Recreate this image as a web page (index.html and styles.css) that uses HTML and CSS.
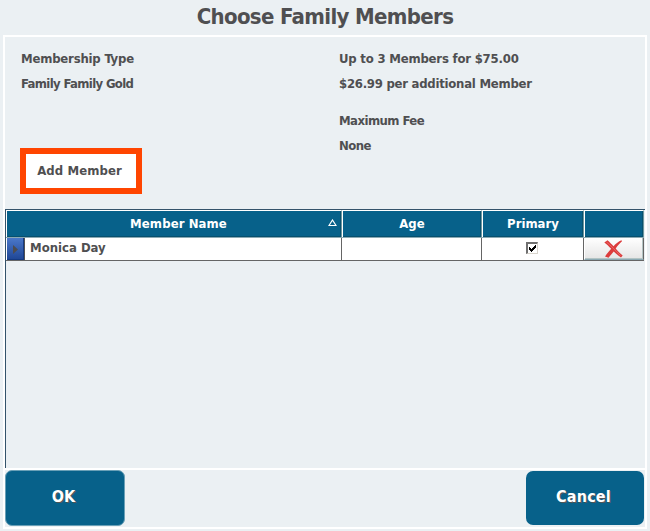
FILE: index.html
```html
<!DOCTYPE html>
<html lang="en">
<head>
    <meta charset="UTF-8">
    <meta name="viewport" content="width=device-width, initial-scale=1.0">
    <title>Choose Family Members</title>
    <link rel="stylesheet" href="styles.css">
</head>
<body>
    <h1>Choose Family Members</h1>
    <main class="panel">
        <section class="info">
            <div class="info-left">
                <p class="membership">Membership Type</p>
                <p class="plan">Family Family Gold</p>
                <button class="add-button">Add Member</button>
            </div>
            <div class="info-right">
                <p class="limit">Up to 3 Members for $75.00</p>
                <p class="extra">$26.99 per additional Member</p>
                <p class="fee">Maximum Fee</p>
                <p class="none">None</p>
            </div>
        </section>
        <section class="grid">
            <div class="row head">
                <div class="cell name"><span class="t-name">Member Name</span>
                    <svg class="sort" width="9" height="8" viewBox="0 0 9 8"><path d="M4.5 1L8 6.500H1Z" fill="none" stroke="#fff" stroke-width="1.200"/></svg>
                </div>
                <div class="cell age">Age</div>
                <div class="cell primary">Primary</div>
                <div class="cell remove"></div>
            </div>
            <div class="row member">
                <div class="marker">
                    <svg width="5" height="9" viewBox="0 0 5 9"><path d="M0 0L5 4.5L0 9Z" fill="#4c4c50"/></svg>
                </div>
                <div class="cell name">Monica Day</div>
                <div class="cell age"></div>
                <div class="cell primary">
                    <span class="check">
                        <svg width="7" height="7" viewBox="0 0 7 7" shape-rendering="crispEdges"><path d="M0 2h1v1h1v1h1v-1h1v-1h1v-1h1v-1h1v3h-1v1h-1v1h-1v1h-1v1h-1v-1h-1v-1h-1z" fill="#000"/></svg>
                    </span>
                </div>
                <div class="cell remove">
                    <svg width="19" height="18" viewBox="0 0 19 18">
                        <path d="M0.300 2.500L3.500 0.300C6 2.500 7.800 4.500 9.500 6.300C12 3.500 14.500 1.500 17.500 0.300L18 1.200C15.500 3.500 13.500 5.800 11.700 8.500C13.500 11 15.800 13 18.700 15.500L17 17.500C14 15.500 11.800 13.500 9.700 11.500C8 13.500 6.500 15.500 4.500 17.800L1 16.500C3 13.500 5 11.300 7.200 8.800C5 6.500 3 4.500 0.300 2.500Z" fill="#dc3c3c"/>
                        <path d="M2.500 2C7 5.500 11 10.500 16.500 15.500" fill="none" stroke="#e96868"/>
                    </svg>
                </div>
            </div>
        </section>
        <footer class="actions">
            <button class="ok">OK</button>
            <button class="cancel">Cancel</button>
        </footer>
    </main>
</body>
</html>
```
FILE: styles.css
```css
* {
    box-sizing: border-box;
}
body {
    margin: 0;
    height: 531px;
    overflow: hidden;
    background: #ebf0f3;
    color: #4f4f51;
    font: bold 13px/17px "DejaVu Sans Condensed", "DejaVu Sans", sans-serif;
    font-stretch: condensed;
}
h1, p {
    margin: 0;
    white-space: nowrap;
}
h1 {
    height: 35px;
    padding-top: 3px;
    text-align: center;
    font-size: 22px;
    line-height: 28px;
    letter-spacing: -0.65px;
}
.panel {
    display: flex;
    flex-direction: column;
    width: 644px;
    height: 494px;
    margin-left: 3px;
    border: 2px solid #fff;
}
.info {
    display: flex;
    height: 172px;
    padding: 13px 0 0 16px;
}
.info-left {
    width: 318px;
}
.info p {
    height: 25px;
}
.info .extra {
    height: 37px;
    letter-spacing: -0.25px;
}
.membership, .limit {
    letter-spacing: -0.2px;
}
.plan {
    letter-spacing: -0.65px;
}
.fee, .none {
    letter-spacing: -0.55px;
}
button {
    padding: 0;
    border: 0;
    color: inherit;
    font: inherit;
}
.add-button {
    display: block;
    width: 122px;
    height: 46px;
    margin: 48px 0 0 -1px;
    padding: 0 3px 2px 0;
    border: 6px solid #ff4500;
    background: #fff;
    letter-spacing: 0.1px;
}
.grid {
    height: 259px;
    border-top: 1px solid #34536a;
    border-left: 1px solid #34536a;
}
.row {
    display: flex;
    width: 638px;
}
.cell {
    display: flex;
    align-items: center;
    justify-content: center;
    border-right: 1px solid #656565;
}
.name {
    width: 336px;
}
.age {
    width: 140px;
}
.primary {
    width: 102px;
}
.remove {
    width: 60px;
}
.head {
    height: 28px;
    border-bottom: 1px solid #8aa9b3;
    color: #fff;
}
.head .cell {
    padding-bottom: 2px;
    border-top: 1px solid #fff;
    border-left: 1px solid #fff;
    border-right-color: #6d979e;
    background: #07618a;
    box-shadow: inset -1px -1px #07506f;
}
.head .name {
    padding-left: 22px;
    letter-spacing: 0.1px;
}
.t-name {
    margin: 0 auto;
}
.sort {
    margin-right: 4px;
}
.member {
    height: 23px;
    border-bottom: 1px solid #656565;
    background: #fff;
}
.marker {
    display: flex;
    align-items: center;
    justify-content: center;
    width: 19px;
    border-left: 1px solid #fff;
    border-right: 1px solid #515154;
    background: linear-gradient(#4b78c9, #1e4594);
    box-shadow: inset -1px -1px #153a82;
}
.member .name {
    justify-content: flex-start;
    width: 317px;
    padding: 0 0 4px 5px;
}
.check {
    display: flex;
    align-items: center;
    justify-content: center;
    width: 12px;
    height: 12px;
    margin: 0 1px 2px 0;
    border: 1px solid #d8d4cc;
    border-top: 2px solid #707070;
    border-left: 2px solid #707070;
}
.member .remove {
    padding-right: 2px;
    border-left: 1px solid #fff;
    border-bottom: 1px solid #8aa9b3;
    background: linear-gradient(#fff, #e5e5e5);
    box-shadow: inset -1px -1px #b4c4c4;
}
.actions {
    display: flex;
    justify-content: space-between;
    height: 59px;
    border-top: 2px solid #fff;
}
.ok, .cancel {
    padding: 0 3px 2px 0;
    border-radius: 7px;
    background: #07618a;
    color: #fff;
    font-size: 16px;
    line-height: 20px;
    text-shadow: 1px 1px #555;
}
.ok {
    width: 120px;
    height: 56px;
    border: 1px solid #6aa0b7;
}
.cancel {
    width: 118px;
    height: 54px;
    margin: 1px 1px 0 0;
    letter-spacing: 0.2px;
}
```
